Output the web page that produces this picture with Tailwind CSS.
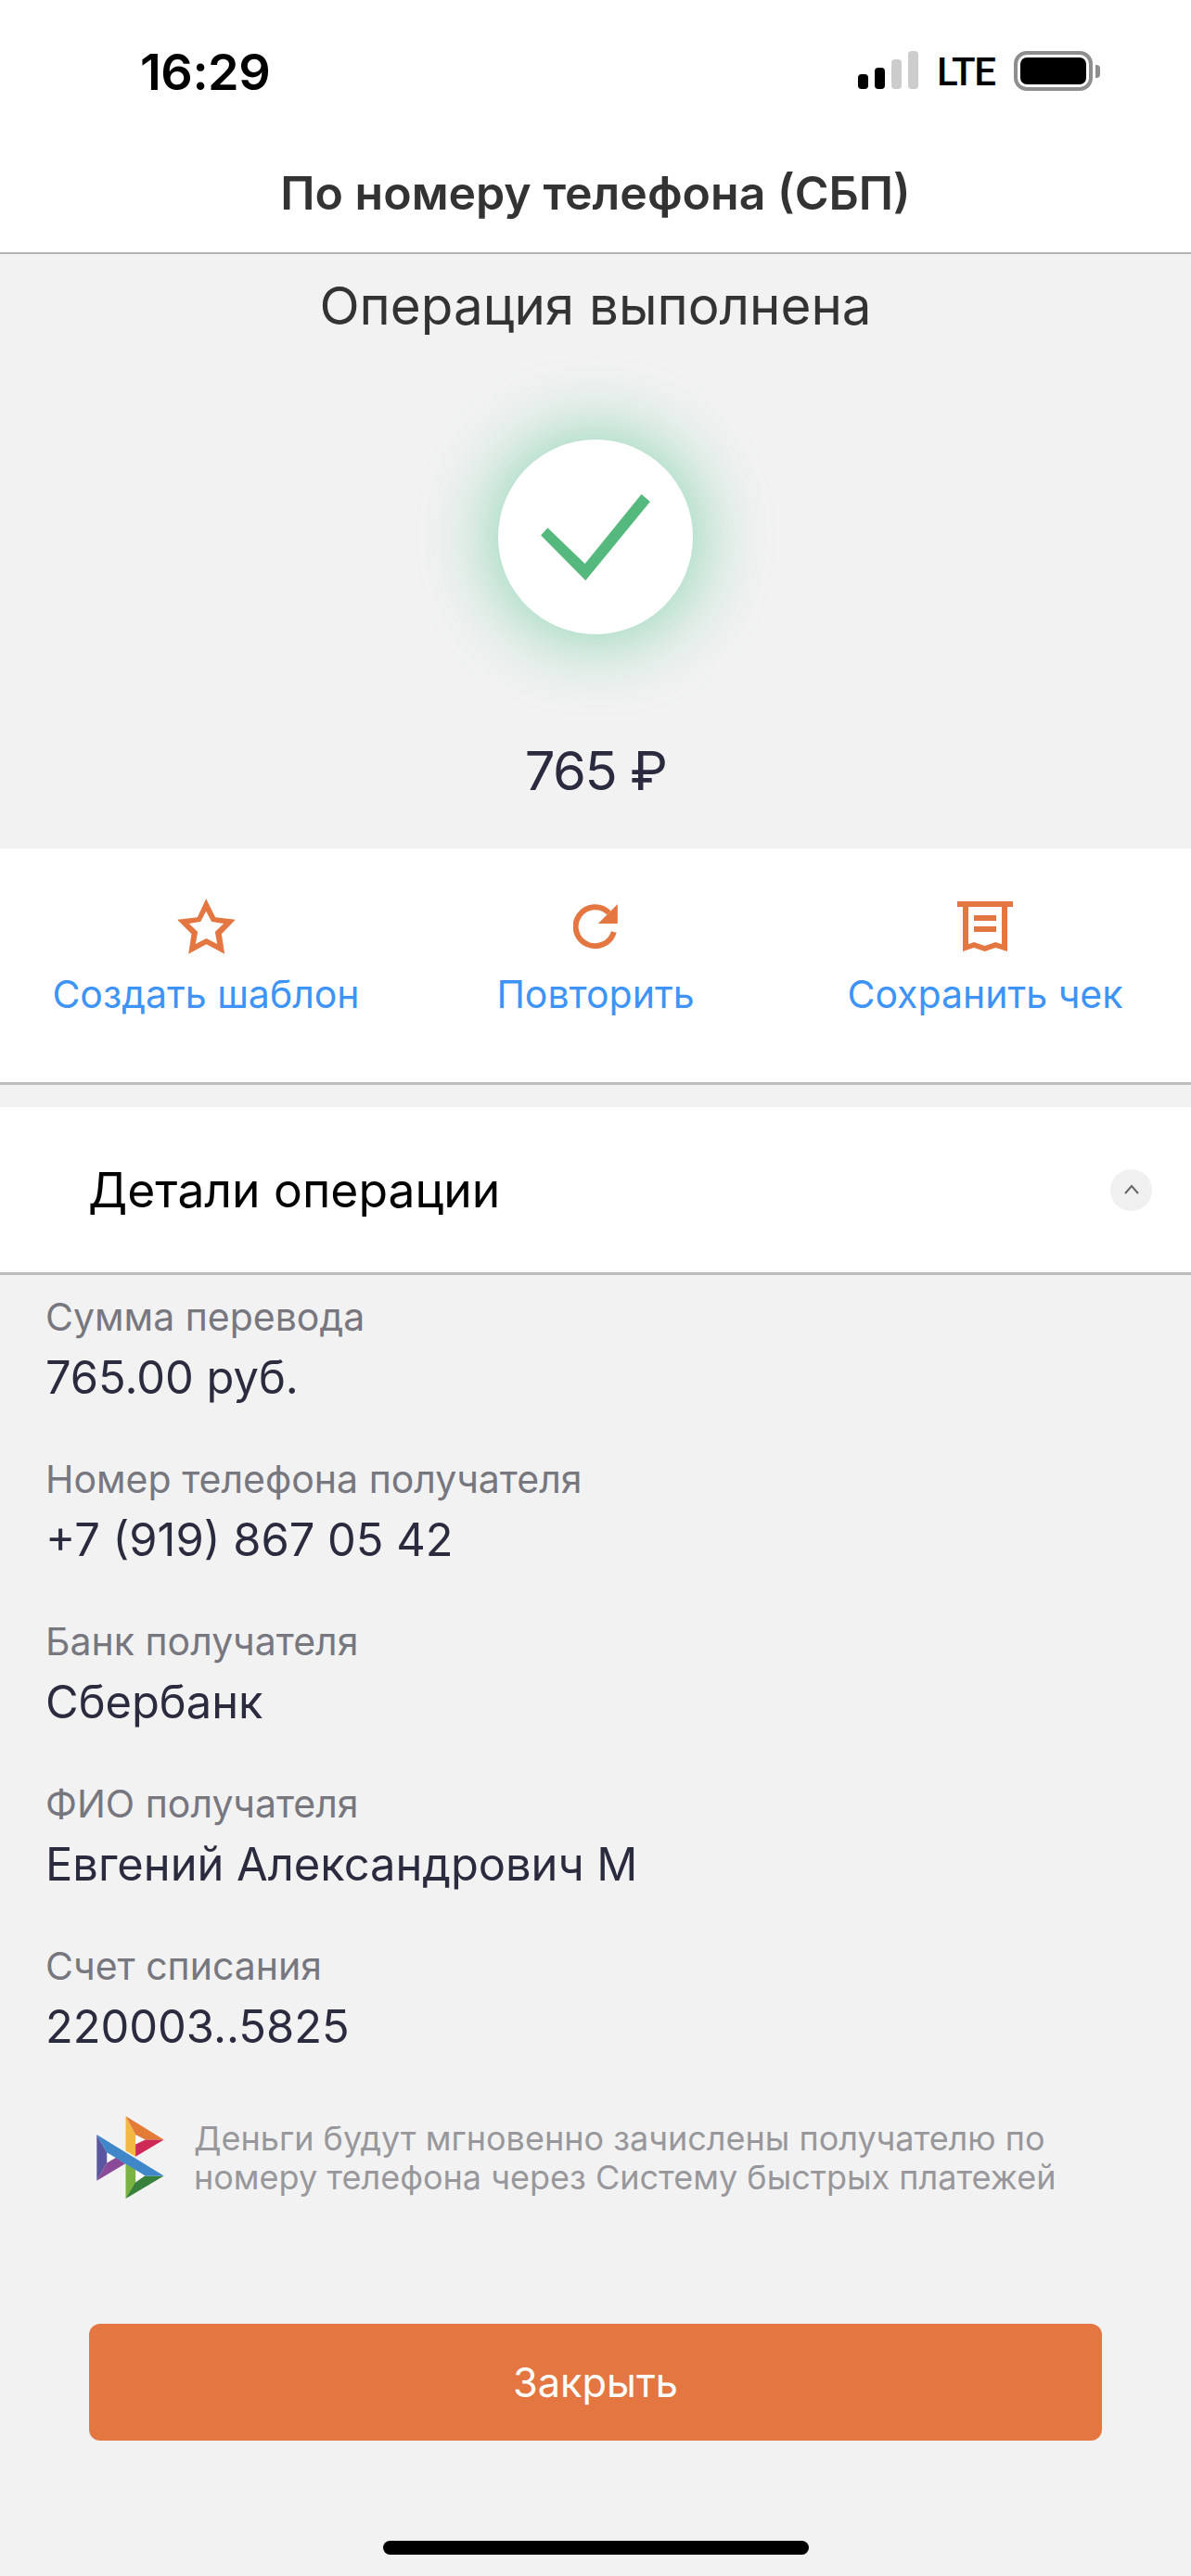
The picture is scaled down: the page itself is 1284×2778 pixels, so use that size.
<!DOCTYPE html>
<html lang="ru">
<head>
    <meta charset="UTF-8">
    <meta name="viewport" content="width=device-width, initial-scale=1.0">
    <title>Операция выполнена</title>
    <script src="https://cdn.jsdelivr.net/npm/@tailwindcss/browser@4"></script>
</head>
<body class="bg-[#f2f2f2] font-['Inter','Noto_Sans',sans-serif] text-[#2b2b40]">
<div class="w-[1284px] h-[2778px] flex flex-col overflow-hidden">

    <!-- status bar + title -->
    <header class="bg-white h-[274px] border-b-2 border-[#b4b4b4] flex flex-col shrink-0">
        <div class="h-[152px] pt-[47px] pl-[151px] pr-[98px] flex justify-between items-start">
            <span class="text-[54px] leading-[62px] font-semibold text-black tracking-[-0.5px]">16:29</span>
            <div class="flex items-start mt-[8px]">
                <div class="flex items-end gap-[7px] h-[41px] mr-[20px]">
                    <span class="w-[11px] h-[16px] rounded-[4px] bg-black"></span>
                    <span class="w-[11px] h-[23px] rounded-[4px] bg-black"></span>
                    <span class="w-[11px] h-[32px] rounded-[4px] bg-[#cccccc]"></span>
                    <span class="w-[11px] h-[41px] rounded-[4px] bg-[#cccccc]"></span>
                </div>
                <span class="text-[42px] leading-[46px] font-medium text-black mr-[21px] w-[62px] font-['Roboto',sans-serif] whitespace-nowrap tracking-[-1.5px]">LTE</span>
                <div class="w-[85px] h-[43px] border-[4px] border-[#8e8e8e] rounded-[14px] p-[3px]">
                    <div class="w-full h-full bg-black rounded-[7px]"></div>
                </div>
                <span class="w-[5px] h-[14px] bg-[#8e8e8e] rounded-r-[4px] mt-[15px] ml-[3px]"></span>
            </div>
        </div>
        <h1 class="text-[50px] leading-[60px] font-semibold text-[#333333] text-center mt-[26px]">По номеру телефона (СБП)</h1>
    </header>

    <!-- result -->
    <section class="h-[641px] flex flex-col items-center shrink-0">
        <p class="text-[56.5px] leading-[68px] text-[#333333] mt-[22px]">Операция выполнена</p>
        <div class="w-[210px] h-[210px] mt-[110px] rounded-full bg-white shadow-[0_0_80px_6px_rgba(94,200,150,0.7)] flex items-center justify-center">
            <svg width="118" height="93" viewBox="548 460 352 278"><polygon fill="#55b87c" points="570,568 690,684 872,460 900,484 692,738 548,592"/></svg>
        </div>
        <p class="text-[58px] leading-[70px] mt-[112px] tracking-[-1.5px]">765 ₽</p>
    </section>

    <!-- actions -->
    <section class="bg-white h-[255px] border-b-[3px] border-[#bdbdbd] px-3 grid grid-cols-3 shrink-0">
        <div class="flex flex-col items-center">
            <svg class="mt-[54px]" width="63" height="60" viewBox="92 57 188 180"><path fill="#e47741" fill-rule="evenodd" d="M185 58L215 118 280 125 235 172 245 236 186 205 128 236 138 172 92 125 157 118zM185 98L167 132 130 138 158 165 151 204 186 186 221 204 214 165 242 138 203 132z"/></svg>
            <span class="text-[41px] leading-[50px] text-[#3d94f6] mt-[18px] whitespace-nowrap">Создать шаблон</span>
        </div>
        <div class="flex flex-col items-center">
            <svg class="mt-[54px]" width="48" height="60" viewBox="85 57 143 180"><path fill="none" stroke="#e47741" stroke-width="18" d="M216 165A63 63 0 1 1 200 103"/><polygon fill="#e47741" points="228,75 228,138 165,138"/></svg>
            <span class="text-[41px] leading-[50px] text-[#3d94f6] mt-[18px] whitespace-nowrap">Повторить</span>
        </div>
        <div class="flex flex-col items-center">
            <svg class="mt-[54px]" width="60" height="60" viewBox="66 57 180 180"><path fill="#e47741" fill-rule="evenodd" d="M66 66H246V84H228V228L190 216 155 228 120 216 84 228V84H66zM102 84V205L120 198 155 210 190 198 210 205V84zM120 111H192V129H120zM120 147H192V165H120z"/></svg>
            <span class="text-[41px] leading-[50px] text-[#3d94f6] mt-[18px] whitespace-nowrap">Сохранить чек</span>
        </div>
    </section>

    <!-- details header -->
    <section class="bg-white h-[181px] mt-[24px] border-b-[3px] border-[#bdbdbd] pl-[95px] pr-[42px] flex items-center justify-between shrink-0">
        <h2 class="text-[51.6px] leading-[60px] text-black">Детали операции</h2>
        <div class="w-[45px] h-[45px] rounded-full bg-[#f0f0f0] flex items-center justify-center">
            <svg width="18" height="12" viewBox="0 0 18 12"><path d="M2 10l7-8 7 8" fill="none" stroke="#666666" stroke-width="2"/></svg>
        </div>
    </section>

    <!-- details list -->
    <dl class="pl-[49px] pt-[20px] flex flex-col gap-[53px] shrink-0">
        <div><dt class="text-[41px] leading-[50px] text-[#77777f]">Сумма перевода</dt><dd class="text-[48.8px] leading-[62px] mt-[10px]">765.00 руб.</dd></div>
        <div><dt class="text-[41px] leading-[50px] text-[#77777f]">Номер телефона получателя</dt><dd class="text-[48.8px] leading-[62px] mt-[10px]">+7 (919) 867 05 42</dd></div>
        <div><dt class="text-[41px] leading-[50px] text-[#77777f]">Банк получателя</dt><dd class="text-[48.8px] leading-[62px] mt-[10px]">Сбербанк</dd></div>
        <div><dt class="text-[41px] leading-[50px] text-[#77777f]">ФИО получателя</dt><dd class="text-[48.8px] leading-[62px] mt-[10px]">Евгений Александрович М</dd></div>
        <div><dt class="text-[41px] leading-[50px] text-[#77777f]">Счет списания</dt><dd class="text-[48.8px] leading-[62px] mt-[10px]">220003..5825</dd></div>
    </dl>

    <!-- sbp note -->
    <div class="flex items-center pl-[104px] mt-[65px] shrink-0">
        <svg width="73" height="89" viewBox="132 120 218 268">
            <polygon fill="#ffffff" points="258,180 290,197 258,212"/>
            <polygon fill="#ffffff" points="165,238 195,255 165,272"/>
            <polygon fill="#ffffff" points="258,294 288,314 258,335"/>
            <polygon fill="#f2b841" points="226,120 258,180 258,252 226,232"/>
            <polygon fill="#e27b36" points="226,120 350,197 290,197 258,180"/>
            <polygon fill="#cf2a55" points="350,197 258,252 258,212 290,197"/>
            <polygon fill="#5a56a0" points="132,180 165,238 165,272 132,330"/>
            <polygon fill="#8b4a97" points="132,330 165,272 195,255 225,274"/>
            <polygon fill="#7ab342" points="226,274 258,294 258,352 226,388"/>
            <polygon fill="#37813d" points="226,388 258,335 288,314 350,314"/>
            <polygon fill="#3f87c9" points="132,180 350,314 290,314 165,238"/>
        </svg>
        <p class="text-[36px] leading-[42px] text-[#98989c] ml-[32px] whitespace-nowrap">Деньги будут мгновенно зачислены получателю по<br>номеру телефона через Систему быстрых платежей</p>
    </div>

    <!-- close -->
    <button class="mx-[96px] mt-[135px] h-[126px] rounded-[12px] bg-[#e47741] text-white text-[43.3px] shrink-0">Закрыть</button>

    <div class="w-[459px] h-[15px] rounded-full bg-black mx-auto mt-[108px] shrink-0"></div>
</div>
</body>
</html>
